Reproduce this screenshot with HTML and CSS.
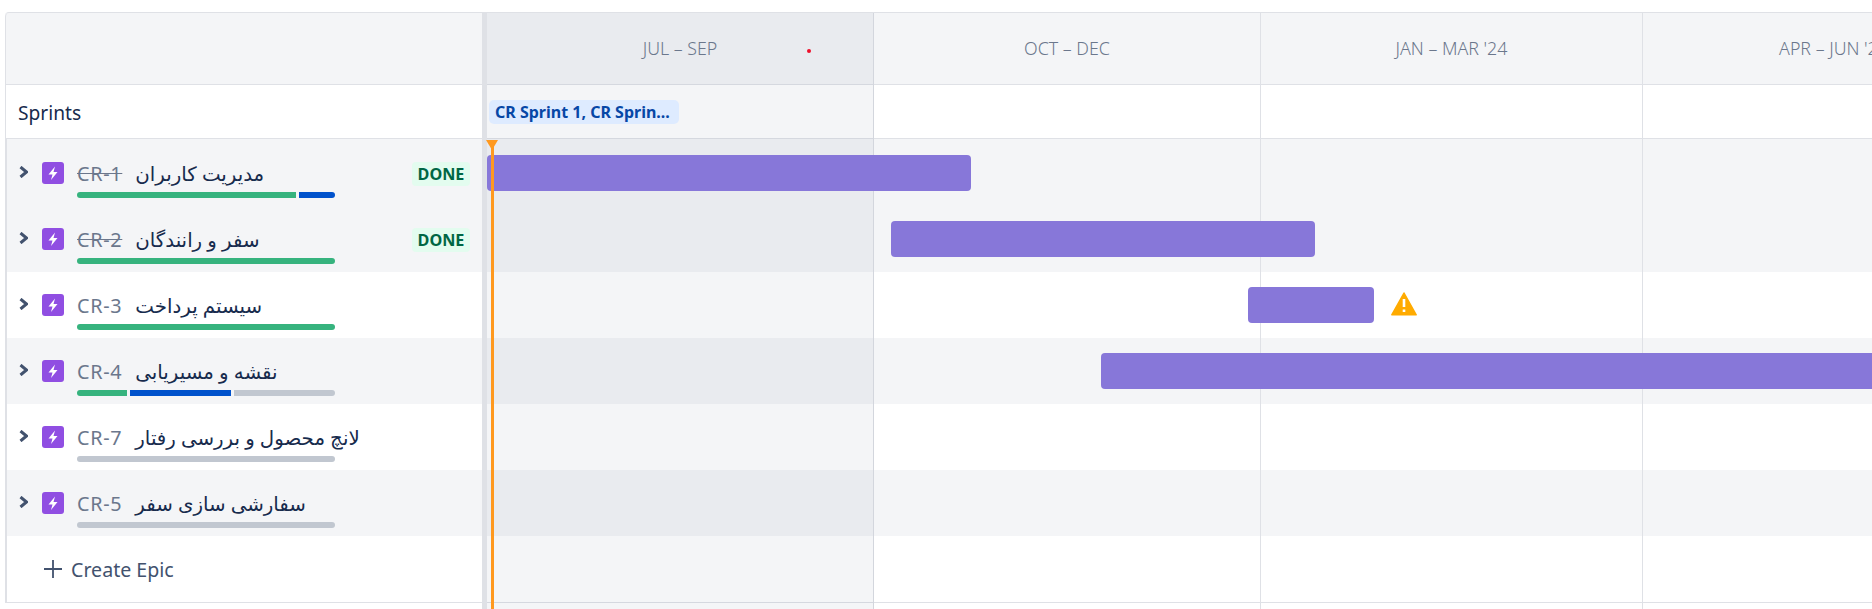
FILE: index.html
```html
<!DOCTYPE html>
<html>

<head>
  <meta charset="utf-8">
  <title>Roadmap</title>
  <link rel="stylesheet" href="styles.css">
</head>

<body>
  <div class="roadmap">

    <div class="list">
      <div class="list-head"></div>
      <div class="list-sprints">Sprints</div>
      <div class="rows">
        <div class="epic tint">
          <svg class="chevron" viewBox="0 0 9 12"><path d="M1.5 1 L7.5 6 L1.5 11" /></svg>
          <svg class="epic-icon" viewBox="0 0 22 22"><path d="M13 4.5 L6.5 12.5 H10.5 L9 18 L15.5 10 H11.5 Z" /></svg>
          <div class="epic-info">
            <div class="epic-line"><span class="key done">CR-1</span><span class="name" dir="rtl">مدیریت کاربران</span></div>
            <div class="progress">
              <span class="seg green" style="width: 219px"></span>
              <span class="seg blue" style="width: 36px"></span>
            </div>
          </div>
          <span class="badge">DONE</span>
        </div>
        <div class="epic tint">
          <svg class="chevron" viewBox="0 0 9 12"><path d="M1.5 1 L7.5 6 L1.5 11" /></svg>
          <svg class="epic-icon" viewBox="0 0 22 22"><path d="M13 4.5 L6.5 12.5 H10.5 L9 18 L15.5 10 H11.5 Z" /></svg>
          <div class="epic-info">
            <div class="epic-line"><span class="key done">CR-2</span><span class="name" dir="rtl">سفر و رانندگان</span></div>
            <div class="progress">
              <span class="seg green" style="width: 258px"></span>
            </div>
          </div>
          <span class="badge">DONE</span>
        </div>
        <div class="epic">
          <svg class="chevron" viewBox="0 0 9 12"><path d="M1.5 1 L7.5 6 L1.5 11" /></svg>
          <svg class="epic-icon" viewBox="0 0 22 22"><path d="M13 4.5 L6.5 12.5 H10.5 L9 18 L15.5 10 H11.5 Z" /></svg>
          <div class="epic-info">
            <div class="epic-line"><span class="key">CR-3</span><span class="name" dir="rtl">سیستم پرداخت</span></div>
            <div class="progress">
              <span class="seg green" style="width: 258px"></span>
            </div>
          </div>
        </div>
        <div class="epic tint">
          <svg class="chevron" viewBox="0 0 9 12"><path d="M1.5 1 L7.5 6 L1.5 11" /></svg>
          <svg class="epic-icon" viewBox="0 0 22 22"><path d="M13 4.5 L6.5 12.5 H10.5 L9 18 L15.5 10 H11.5 Z" /></svg>
          <div class="epic-info">
            <div class="epic-line"><span class="key">CR-4</span><span class="name" dir="rtl">نقشه و مسیریابی</span></div>
            <div class="progress">
              <span class="seg green" style="width: 50px"></span>
              <span class="seg blue" style="width: 101px"></span>
              <span class="seg grey" style="width: 101px"></span>
            </div>
          </div>
        </div>
        <div class="epic">
          <svg class="chevron" viewBox="0 0 9 12"><path d="M1.5 1 L7.5 6 L1.5 11" /></svg>
          <svg class="epic-icon" viewBox="0 0 22 22"><path d="M13 4.5 L6.5 12.5 H10.5 L9 18 L15.5 10 H11.5 Z" /></svg>
          <div class="epic-info">
            <div class="epic-line"><span class="key">CR-7</span><span class="name" dir="rtl">لانچ محصول و بررسی رفتار</span></div>
            <div class="progress">
              <span class="seg grey" style="width: 258px"></span>
            </div>
          </div>
        </div>
        <div class="epic tint">
          <svg class="chevron" viewBox="0 0 9 12"><path d="M1.5 1 L7.5 6 L1.5 11" /></svg>
          <svg class="epic-icon" viewBox="0 0 22 22"><path d="M13 4.5 L6.5 12.5 H10.5 L9 18 L15.5 10 H11.5 Z" /></svg>
          <div class="epic-info">
            <div class="epic-line"><span class="key">CR-5</span><span class="name" dir="rtl">سفارشی سازی سفر</span></div>
            <div class="progress">
              <span class="seg grey" style="width: 258px"></span>
            </div>
          </div>
        </div>
        <div class="create">
          <svg class="plus" viewBox="0 0 18 18"><path d="M9 0 V18 M0 9 H18" /></svg>
          <span>Create Epic</span>
        </div>
      </div>
    </div>

    <div class="splitter"></div>

    <div class="timeline">
      <div class="tl-head"></div>
      <div class="tl-sprints"><span class="sprint-chip">CR Sprint 1, CR Sprin...</span></div>
      <div class="rows">
        <div class="tl-row tint"><div class="bar" style="left: 0; width: 484px"></div></div>
        <div class="tl-row tint"><div class="bar" style="left: 404px; width: 424px"></div></div>
        <div class="tl-row">
          <div class="bar" style="left: 761px; width: 126px"></div>
          <svg class="warning" style="left: 904px" viewBox="0 0 26 24">
            <path class="warning-bg" d="M13 1 L25.2 22.8 H0.8 Z" />
            <path class="warning-mark" d="M13 7 V15 M13 17.5 V20" />
          </svg>
        </div>
        <div class="tl-row tint"><div class="bar" style="left: 614px; width: 1400px"></div></div>
        <div class="tl-row"></div>
        <div class="tl-row tint"></div>
        <div class="tl-row last"></div>
      </div>

      <!-- quarter columns, lie over the row stripes -->
      <div class="quarters">
        <div class="quarter current" style="width: 387px"><div class="quarter-label">JUL – SEP</div></div>
        <div class="quarter" style="width: 387px"><div class="quarter-label">OCT – DEC</div></div>
        <div class="quarter" style="width: 382px"><div class="quarter-label">JAN – MAR '24</div></div>
        <div class="quarter" style="width: 382px"><div class="quarter-label">APR – JUN '24</div></div>
      </div>

      <span class="red-dot"></span>
      <div class="today"></div>
    </div>

  </div>
</body>

</html>
```

FILE: styles.css
```css
html,
body {
  margin: 0;
  height: 100%;
  overflow: hidden;
  background: #ffffff;
}

body {
  font-family: "Noto Sans", "DejaVu Sans", sans-serif;
  color: #172b4d;
}

.roadmap {
  display: flex;
  margin: 12px 0 0 5px;
  width: 2100px;
  height: 597px;
  border-top: 1px solid #dfe1e6;
  border-top-left-radius: 4px;
}

/* left pane */
.list {
  width: 477px;
  flex: none;
}

.list-head {
  height: 71px;
  background: #f4f5f7;
  border-left: 1px solid #dfe1e6;
  border-bottom: 1px solid #dfe1e6;
  border-top-left-radius: 4px;
}

.list-sprints {
  height: 53px;
  line-height: 55px;
  padding-left: 12px;
  font-size: 19.2px;
  border-left: 1px solid #dfe1e6;
  border-bottom: 1px solid #dfe1e6;
}

.rows {
  padding-top: 1px;
  background: #f4f5f7;
}

.list .rows {
  border-left: 2px solid #dfe1e6;
}

.epic {
  display: flex;
  align-items: flex-start;
  box-sizing: border-box;
  height: 66px;
  padding: 22px 12px 0 12px;
  background: #ffffff;
}

.epic.tint {
  background: #f4f5f7;
}

.chevron {
  width: 9px;
  height: 12px;
  margin: 4px 14px 0 0;
  flex: none;
  fill: none;
  stroke: #42526e;
  stroke-width: 3;
}

.epic-icon {
  width: 22px;
  height: 22px;
  flex: none;
  background: #904ee2;
  border-radius: 3px;
  fill: #ffffff;
}

.epic-info {
  margin-left: 13px;
}

.epic-line {
  display: flex;
  align-items: center;
  height: 26px;
  margin-top: -2px;
  font-size: 19.8px;
  white-space: nowrap;
}

.key {
  color: #6b778c;
  margin-right: 13px;
  letter-spacing: 0.7px;
}

.key.done {
  text-decoration: line-through;
}

.name {
  color: #172b4d;
}

.progress {
  display: flex;
  gap: 3px;
  width: 258px;
  height: 6px;
  margin-top: 6px;
  border-radius: 3px;
  overflow: hidden;
}

.seg {
  display: block;
  flex: none;
  height: 6px;
}

.seg.green {
  background: #36b37e;
}

.seg.blue {
  background: #0052cc;
}

.seg.grey {
  background: #c1c7d0;
}

.badge {
  margin-left: auto;
  width: 58px;
  height: 24px;
  line-height: 24px;
  text-align: center;
  font-size: 16.2px;
  font-weight: 700;
  color: #006644;
  background: #e3fcef;
  border-radius: 4px;
}

.create {
  display: flex;
  align-items: center;
  height: 66px;
  padding-left: 37px;
  font-size: 19.6px;
  color: #42526e;
  background: #ffffff;
  border-bottom: 1px solid #dfe1e6;
}

.plus {
  width: 18px;
  height: 18px;
  margin-right: 9px;
  fill: none;
  stroke: #42526e;
  stroke-width: 1.8;
}

.splitter {
  width: 4px;
  flex: none;
  background: #dfe1e6;
}

/* timeline */
.timeline {
  position: relative;
  flex: 1;
  border-left: 1px solid #dfe1e6;
}

.tl-head {
  height: 71px;
  background: #f4f5f7;
  border-bottom: 1px solid #dfe1e6;
}

.tl-sprints {
  display: flex;
  align-items: center;
  height: 53px;
  padding-left: 2px;
  border-bottom: 1px solid #dfe1e6;
}

.sprint-chip {
  position: relative;
  z-index: 2;
  box-sizing: border-box;
  height: 24px;
  line-height: 24px;
  padding: 0 6px;
  width: 190px;
  font-size: 16px;
  font-weight: 700;
  white-space: nowrap;
  color: #0747a6;
  background: #deebff;
  border-radius: 5px;
}

.tl-row {
  position: relative;
  height: 66px;
  background: #ffffff;
}

.tl-row.tint {
  background: #f4f5f7;
}

.tl-row.last {
  border-bottom: 1px solid #dfe1e6;
}

.bar {
  position: absolute;
  top: 15px;
  height: 36px;
  z-index: 2;
  background: #8777d9;
  border-radius: 4px;
}

.warning {
  position: absolute;
  top: 20px;
  width: 26px;
  height: 24px;
  z-index: 2;
}

.warning-bg {
  fill: #ffab00;
  stroke: #ffab00;
  stroke-width: 1.5;
  stroke-linejoin: round;
}

.warning-mark {
  fill: none;
  stroke: #ffffff;
  stroke-width: 2.6;
}

.quarters {
  position: absolute;
  top: 0;
  left: 0;
  bottom: 0;
  display: flex;
  z-index: 1;
}

.quarter {
  flex: none;
  box-sizing: border-box;
  border-right: 1px solid #dfe1e6;
}

.quarter.current {
  background: rgba(9, 30, 66, 0.045);
  border-right-color: #d3d6dd;
}

.quarter-label {
  height: 71px;
  line-height: 71px;
  text-align: center;
  font-size: 17.8px;
  font-weight: 300;
  color: #6b778c;
}

.red-dot {
  position: absolute;
  left: 320px;
  top: 36px;
  width: 4px;
  height: 4px;
  z-index: 2;
  border-radius: 50%;
  background: #ee0f2a;
}

.today {
  position: absolute;
  left: 4px;
  top: 127px;
  bottom: 0;
  width: 3px;
  z-index: 3;
  background: #ff991f;
}

.today::before {
  content: "";
  position: absolute;
  left: -5px;
  top: 0;
  border-left: 6.5px solid transparent;
  border-right: 6.5px solid transparent;
  border-top: 10px solid #ff991f;
}
```
